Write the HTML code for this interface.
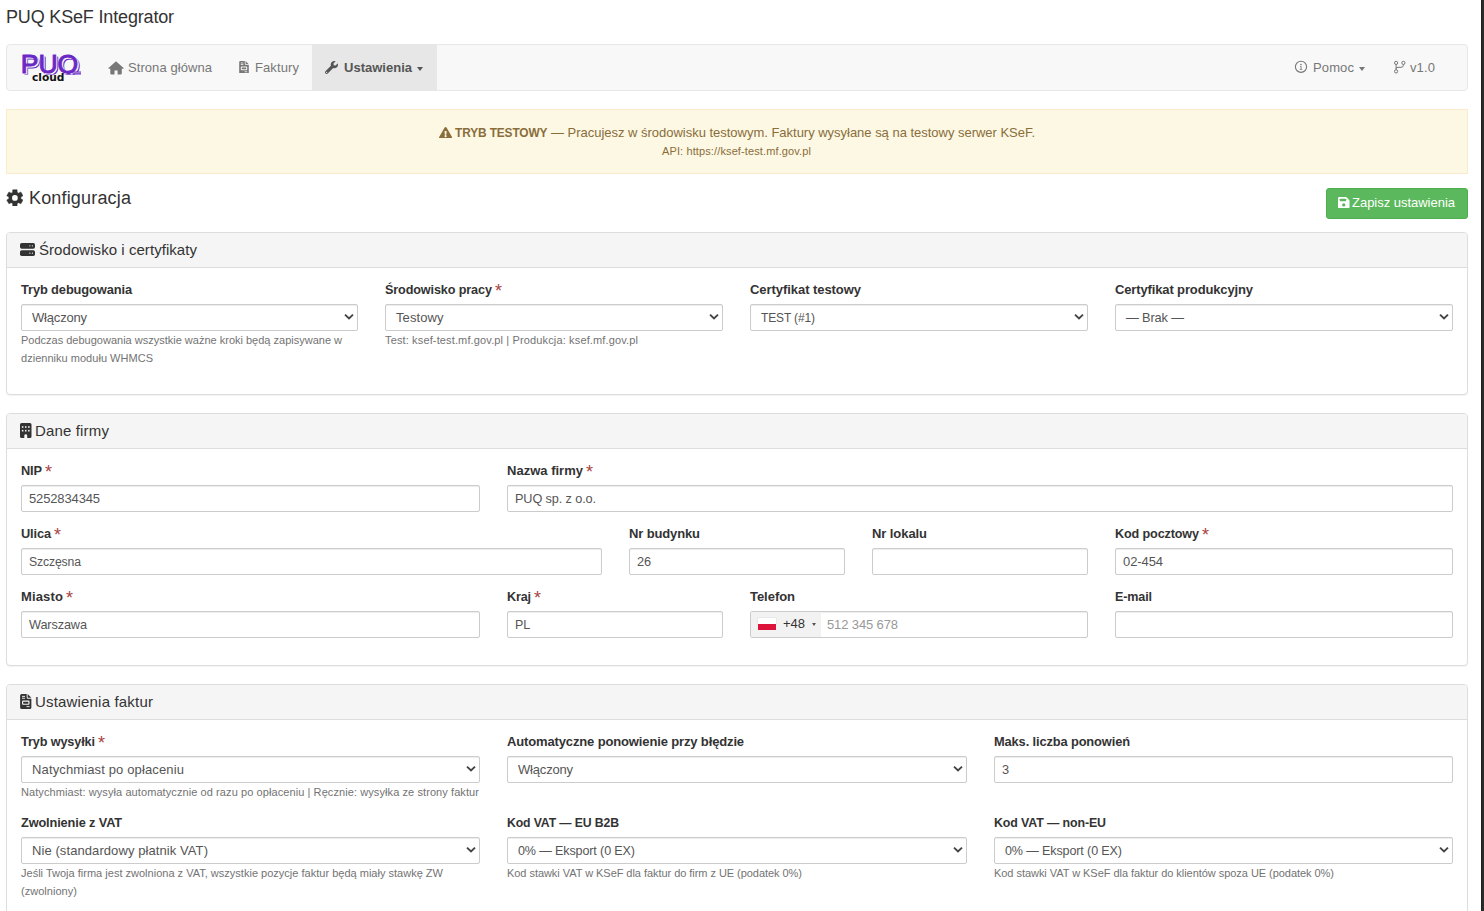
<!DOCTYPE html>
<html lang="pl">
<head>
<meta charset="utf-8">
<title>PUQ KSeF Integrator</title>
<style>
*{box-sizing:border-box}
html,body{margin:0;padding:0}
body{width:1484px;height:911px;overflow:hidden;background:#fff;position:relative;
 font-family:"Liberation Sans",sans-serif;font-size:13px;line-height:18px;color:#333}
.edge{position:absolute;left:1481px;top:0;width:3px;height:911px;background:#2b2b2b;border-left:1px solid #202020}
.a{position:absolute;white-space:nowrap}
.title{left:6px;top:4px;margin:0;font-size:18px;line-height:26px;font-weight:400;color:#333}
.navbar{position:absolute;left:6px;top:44px;width:1462px;height:47px;background:#f8f8f8;border:1px solid #e7e7e7;border-radius:4px}
.nav-active{position:absolute;left:312px;top:45px;width:125px;height:45px;background:#e7e7e7}
.nv{top:58px;line-height:18px;color:#777;font-size:13px}
.nv.act{color:#555;font-weight:700}
.caret{position:absolute;width:0;height:0;border-top:4px solid #777;border-left:3.5px solid transparent;border-right:3.5px solid transparent}
.alert{position:absolute;left:6px;top:109px;width:1462px;height:65px;background:#fcf8e3;border:1px solid #faebcc;border-radius:0}
.al{color:#8a6d3b}
.conf{margin:0;font-size:18px;line-height:26px;font-weight:400}
.btn-save{position:absolute;left:1326px;top:188px;width:142px;height:31px;background:#5cb85c;border:1px solid #4cae4c;border-radius:3px}
.panel{position:absolute;left:6px;width:1462px;background:#fff;border:1px solid #ddd;border-radius:4px;box-shadow:0 1px 1px rgba(0,0,0,.05)}
.ph{position:absolute;left:7px;width:1460px;height:35px;background:#f5f5f5;border-bottom:1px solid #ddd;border-radius:3px 3px 0 0}
.pt{font-size:15px;line-height:20px;color:#333}
.lbl{font-weight:700;line-height:18px;color:#333}
.req{color:#a94442;font-weight:400;line-height:18px}
.box{position:absolute;height:27px;background:#fff;border:1px solid #ccc;border-radius:2px;box-shadow:inset 0 1px 1px rgba(0,0,0,.075)}
.val{color:#555;font-size:13px;line-height:18px}
.ph-t{color:#999}
.help{font-size:11px;line-height:16px;color:#737373}
.chev{position:absolute}
</style>
</head>
<body>
<div class="a title" style="left:6px;top:4px;"><span style="letter-spacing:-0.166px;">PUQ KSeF Integrator</span></div><div class="navbar"></div><div class="nav-active"></div><div class="a nv" style="left:128px;top:59px;"><span style="letter-spacing:0.07px;">Strona główna</span></div><div class="a nv" style="left:255px;top:59px;"><span style="letter-spacing:0.101px;">Faktury</span></div><div class="a nv act" style="left:344px;top:59px;"><span style="letter-spacing:0.008px;">Ustawienia</span></div><div class="caret" style="left:417px;top:67px;border-top-color:#555"></div><div class="a nv" style="left:1313px;top:59px;"><span style="letter-spacing:0.118px;">Pomoc</span></div><div class="caret" style="left:1359px;top:67px"></div><div class="a nv" style="left:1410px;top:59px;"><span style="letter-spacing:0.121px;">v1.0</span></div><div class="alert"></div><div class="a al" style="left:455px;top:124px;"><span style="font-size:11.91px;letter-spacing:-0.127px;font-weight:700">TRYB TESTOWY</span> <span style="letter-spacing:-0.019px;">— Pracujesz w środowisku testowym. Faktury wysyłane są na testowy serwer KSeF.</span></div><div class="a al" style="left:662px;top:143px;font-size:11px;line-height:16px"><span style="letter-spacing:0.118px;">API: https://ksef-test.mf.gov.pl</span></div><div class="a conf" style="left:29px;top:184.7px;"><span style="letter-spacing:0.167px;">Konfiguracja</span></div><div class="btn-save"></div><div class="a " style="left:1352px;top:194px;color:#fff"><span style="letter-spacing:-0.02px;">Zapisz ustawienia</span></div>
<div class="panel" style="top:232px;height:163px"></div><div class="ph" style="top:233px"></div><div class="a pt" style="left:39px;top:240px;"><span style="letter-spacing:0.055px;">Środowisko i certyfikaty</span></div><div class="a lbl" style="left:21px;top:280.5px;"><span style="font-size:12.86px;letter-spacing:-0.122px;">Tryb debugowania</span></div><div class="a lbl" style="left:385px;top:280.5px;"><span style="font-size:12.64px;letter-spacing:-0.122px;">Środowisko pracy</span></div><div class="a req" style="left:495px;top:281.5px;font-size:18px">*</div><div class="a lbl" style="left:750px;top:280.5px;"><span style="letter-spacing:-0.056px;">Certyfikat testowy</span></div><div class="a lbl" style="left:1115px;top:280.5px;"><span style="letter-spacing:-0.134px;">Certyfikat produkcyjny</span></div><div class="box" style="left:21px;top:304px;width:337px"></div><div class="a val" style="left:32px;top:308.5px;"><span style="letter-spacing:-0.181px;">Włączony</span></div><svg class="chev" style="left:343px;top:313px" width="12" height="8" viewBox="0 0 12 8"><path d="M2 1.6 L6 5.4 L10 1.6" fill="none" stroke="#444" stroke-width="1.9"/></svg><div class="box" style="left:385px;top:304px;width:338px"></div><div class="a val" style="left:396px;top:308.5px;"><span style="letter-spacing:0.082px;">Testowy</span></div><svg class="chev" style="left:708px;top:313px" width="12" height="8" viewBox="0 0 12 8"><path d="M2 1.6 L6 5.4 L10 1.6" fill="none" stroke="#444" stroke-width="1.9"/></svg><div class="box" style="left:750px;top:304px;width:338px"></div><div class="a val" style="left:761px;top:308.5px;"><span style="font-size:11.99px;letter-spacing:-0.127px;">TEST (#1)</span></div><svg class="chev" style="left:1073px;top:313px" width="12" height="8" viewBox="0 0 12 8"><path d="M2 1.6 L6 5.4 L10 1.6" fill="none" stroke="#444" stroke-width="1.9"/></svg><div class="box" style="left:1115px;top:304px;width:338px"></div><div class="a val" style="left:1126px;top:308.5px;"><span style="font-size:12.78px;letter-spacing:-0.127px;">— Brak —</span></div><svg class="chev" style="left:1438px;top:313px" width="12" height="8" viewBox="0 0 12 8"><path d="M2 1.6 L6 5.4 L10 1.6" fill="none" stroke="#444" stroke-width="1.9"/></svg><div class="a help" style="left:21px;top:332px;"><span style="">Podczas debugowania wszystkie ważne kroki będą zapisywane w</span></div><div class="a help" style="left:21px;top:350px;"><span style="letter-spacing:0.026px;">dzienniku modułu WHMCS</span></div><div class="a help" style="left:385px;top:332px;"><span style="letter-spacing:0.138px;">Test: ksef-test.mf.gov.pl | Produkcja: ksef.mf.gov.pl</span></div>
<div class="panel" style="top:413px;height:253px"></div><div class="ph" style="top:414px"></div><div class="a pt" style="left:35px;top:421px;"><span style="letter-spacing:0.155px;">Dane firmy</span></div><div class="a lbl" style="left:21px;top:461.5px;"><span style="font-size:12.81px;letter-spacing:-0.142px;">NIP</span></div><div class="a req" style="left:45px;top:462.5px;font-size:18px">*</div><div class="a lbl" style="left:507px;top:461.5px;"><span style="letter-spacing:0.012px;">Nazwa firmy</span></div><div class="a req" style="left:586px;top:462.5px;font-size:18px">*</div><div class="box" style="left:21px;top:485px;width:459px"></div><div class="a val" style="left:29px;top:489.5px;"><span style="letter-spacing:-0.138px;">5252834345</span></div><div class="box" style="left:507px;top:485px;width:946px"></div><div class="a val" style="left:515px;top:489.5px;"><span style="font-size:12.71px;letter-spacing:-0.123px;">PUQ sp. z o.o.</span></div><div class="a lbl" style="left:21px;top:524.5px;"><span style="font-size:12.8px;letter-spacing:-0.133px;">Ulica</span></div><div class="a req" style="left:54px;top:525.5px;font-size:18px">*</div><div class="a lbl" style="left:629px;top:524.5px;"><span style="letter-spacing:-0.13px;">Nr budynku</span></div><div class="a lbl" style="left:872px;top:524.5px;"><span style="letter-spacing:-0.074px;">Nr lokalu</span></div><div class="a lbl" style="left:1115px;top:524.5px;"><span style="font-size:12.61px;letter-spacing:-0.127px;">Kod pocztowy</span></div><div class="a req" style="left:1202px;top:525.5px;font-size:18px">*</div><div class="box" style="left:21px;top:548px;width:581px"></div><div class="a val" style="left:29px;top:552.5px;"><span style="font-size:12.21px;letter-spacing:-0.127px;">Szczęsna</span></div><div class="box" style="left:629px;top:548px;width:216px"></div><div class="a val" style="left:637px;top:552.5px;"><span style="font-size:12.79px;letter-spacing:-0.157px;">26</span></div><div class="box" style="left:872px;top:548px;width:216px"></div><div class="box" style="left:1115px;top:548px;width:338px"></div><div class="a val" style="left:1123px;top:552.5px;"><span style="letter-spacing:-0.088px;">02-454</span></div><div class="a lbl" style="left:21px;top:587.5px;"><span style="letter-spacing:0.151px;">Miasto</span></div><div class="a req" style="left:66px;top:588.5px;font-size:18px">*</div><div class="a lbl" style="left:507px;top:587.5px;"><span style="font-size:12.58px;letter-spacing:-0.137px;">Kraj</span></div><div class="a req" style="left:534px;top:588.5px;font-size:18px">*</div><div class="a lbl" style="left:750px;top:587.5px;"><span style="letter-spacing:-0.041px;">Telefon</span></div><div class="a lbl" style="left:1115px;top:587.5px;"><span style="font-size:12.57px;letter-spacing:-0.132px;">E-mail</span></div><div class="box" style="left:21px;top:611px;width:459px"></div><div class="a val" style="left:29px;top:615.5px;"><span style="font-size:12.73px;letter-spacing:-0.127px;">Warszawa</span></div><div class="box" style="left:507px;top:611px;width:216px"></div><div class="a val" style="left:515px;top:615.5px;"><span style="font-size:12.46px;letter-spacing:-0.164px;">PL</span></div><div class="box" style="left:750px;top:611px;width:338px"></div><div style="position:absolute;left:751px;top:612px;width:70px;height:25px;background:#f2f2f2"></div><div style="position:absolute;left:758px;top:618px;width:18px;height:6px;background:#fff;box-shadow:0 0 0 .5px #ddd"></div><div style="position:absolute;left:758px;top:624px;width:18px;height:6px;background:#dc143c"></div><div class="a " style="left:783px;top:614.8px;color:#333;line-height:18px"><span style="letter-spacing:-0.025px;">+48</span></div><div class="caret" style="left:812px;top:623px;border-top:3px solid #555;border-left-width:2px;border-right-width:2px"></div><div class="a val ph-t" style="left:827px;top:615.5px;"><span style="letter-spacing:-0.124px;">512 345 678</span></div><div class="box" style="left:1115px;top:611px;width:338px"></div>
<div class="panel" style="top:684px;height:260px"></div><div class="ph" style="top:685px"></div><div class="a pt" style="left:35px;top:692px;"><span style="letter-spacing:0.178px;">Ustawienia faktur</span></div><div class="a lbl" style="left:21px;top:732.5px;"><span style="font-size:12.68px;letter-spacing:-0.124px;">Tryb wysyłki</span></div><div class="a req" style="left:98px;top:733.5px;font-size:18px">*</div><div class="a lbl" style="left:507px;top:732.5px;"><span style="letter-spacing:-0.14px;">Automatyczne ponowienie przy błędzie</span></div><div class="a lbl" style="left:994px;top:732.5px;"><span style="font-size:12.85px;letter-spacing:-0.123px;">Maks. liczba ponowień</span></div><div class="box" style="left:21px;top:756px;width:459px"></div><div class="a val" style="left:32px;top:760.5px;"><span style="letter-spacing:0.134px;">Natychmiast po opłaceniu</span></div><svg class="chev" style="left:465px;top:765px" width="12" height="8" viewBox="0 0 12 8"><path d="M2 1.6 L6 5.4 L10 1.6" fill="none" stroke="#444" stroke-width="1.9"/></svg><div class="box" style="left:507px;top:756px;width:460px"></div><div class="a val" style="left:518px;top:760.5px;"><span style="letter-spacing:-0.181px;">Włączony</span></div><svg class="chev" style="left:952px;top:765px" width="12" height="8" viewBox="0 0 12 8"><path d="M2 1.6 L6 5.4 L10 1.6" fill="none" stroke="#444" stroke-width="1.9"/></svg><div class="box" style="left:994px;top:756px;width:459px"></div><div class="a val" style="left:1002px;top:760.5px;"><span style="font-size:12.79px;letter-spacing:-0.118px;">3</span></div><div class="a help" style="left:21px;top:784px;"><span style="letter-spacing:0.085px;">Natychmiast: wysyła automatycznie od razu po opłaceniu | Ręcznie: wysyłka ze strony faktur</span></div><div class="a lbl" style="left:21px;top:813.5px;"><span style="font-size:12.75px;letter-spacing:-0.126px;">Zwolnienie z VAT</span></div><div class="a lbl" style="left:507px;top:813.5px;"><span style="font-size:12.25px;letter-spacing:-0.122px;">Kod VAT — EU B2B</span></div><div class="a lbl" style="left:994px;top:813.5px;"><span style="font-size:12.4px;letter-spacing:-0.121px;">Kod VAT — non-EU</span></div><div class="box" style="left:21px;top:837px;width:459px"></div><div class="a val" style="left:32px;top:841.5px;"><span style="letter-spacing:0.083px;">Nie (standardowy płatnik VAT)</span></div><svg class="chev" style="left:465px;top:846px" width="12" height="8" viewBox="0 0 12 8"><path d="M2 1.6 L6 5.4 L10 1.6" fill="none" stroke="#444" stroke-width="1.9"/></svg><div class="box" style="left:507px;top:837px;width:460px"></div><div class="a val" style="left:518px;top:841.5px;"><span style="font-size:12.55px;letter-spacing:-0.123px;">0% — Eksport (0 EX)</span></div><svg class="chev" style="left:952px;top:846px" width="12" height="8" viewBox="0 0 12 8"><path d="M2 1.6 L6 5.4 L10 1.6" fill="none" stroke="#444" stroke-width="1.9"/></svg><div class="box" style="left:994px;top:837px;width:459px"></div><div class="a val" style="left:1005px;top:841.5px;"><span style="font-size:12.55px;letter-spacing:-0.123px;">0% — Eksport (0 EX)</span></div><svg class="chev" style="left:1438px;top:846px" width="12" height="8" viewBox="0 0 12 8"><path d="M2 1.6 L6 5.4 L10 1.6" fill="none" stroke="#444" stroke-width="1.9"/></svg><div class="a help" style="left:21px;top:865px;"><span style="letter-spacing:0.009px;">Jeśli Twoja firma jest zwolniona z VAT, wszystkie pozycje faktur będą miały stawkę ZW</span></div><div class="a help" style="left:21px;top:883px;"><span style="letter-spacing:0.034px;">(zwolniony)</span></div><div class="a help" style="left:507px;top:865px;"><span style="letter-spacing:-0.048px;">Kod stawki VAT w KSeF dla faktur do firm z UE (podatek 0%)</span></div><div class="a help" style="left:994px;top:865px;"><span style="letter-spacing:-0.046px;">Kod stawki VAT w KSeF dla faktur do klientów spoza UE (podatek 0%)</span></div>
<svg style="position:absolute;left:18px;top:50px" width="68" height="36" viewBox="0 0 68 36"><defs><clipPath id="cb"><rect x="0" y="0" width="68" height="24.4"/></clipPath></defs><g clip-path="url(#cb)"><text x="4.8" y="24.5" textLength="57.5" lengthAdjust="spacingAndGlyphs" style="font-family:'Liberation Sans',sans-serif;font-weight:400;font-size:26.5px" fill="#6a28c4" stroke="#6a28c4" stroke-width="1" stroke-linejoin="round">PUQ</text><text x="3.9" y="23.8" textLength="57.5" lengthAdjust="spacingAndGlyphs" style="font-family:'Liberation Sans',sans-serif;font-weight:400;font-size:26.5px" fill="#f8f8f8" stroke="#f8f8f8" stroke-width="1" stroke-linejoin="round">PUQ</text><text x="2.7" y="22.8" textLength="57.5" lengthAdjust="spacingAndGlyphs" style="font-family:'Liberation Sans',sans-serif;font-weight:400;font-size:26.5px" fill="#6a28c4" stroke="#6a28c4" stroke-width="1" stroke-linejoin="round">PUQ</text></g><path d="M54 21.6H63V24.4H55Z" fill="#6a28c4"/><path d="M55 22.9H63" stroke="#f8f8f8" stroke-width=".6"/><text x="14" y="30.8" textLength="32.5" lengthAdjust="spacingAndGlyphs" style="font-family:'DejaVu Sans','Liberation Sans',sans-serif;font-weight:700;font-size:10.5px" fill="#111">cloud</text></svg><svg style="position:absolute;left:107.5px;top:60.5px" width="16" height="14" viewBox="0 0 16 14"><path d="M8 .3 L15.6 6.9 Q16 7.6 15.2 7.7 H13.8 V12.3 Q13.8 13.5 12.6 13.5 H9.6 V9.4 H6.5 V13.5 H3.5 Q2.3 13.5 2.3 12.3 V7.7 H.9 Q0 7.6 .5 6.9 Z" fill="#777"/></svg><svg style="position:absolute;left:239.2px;top:60.7px" width="10" height="12.8" viewBox="0 0 12 16"><path d="M1.6 0 H7 V3.6 Q7 5 8.4 5 H12 V14.4 Q12 16 10.4 16 H1.6 Q0 16 0 14.4 V1.6 Q0 0 1.6 0 Z M8 0 L12 4 H8 Z" fill="#777"/><rect x="2" y="2" width="3.2" height="1" fill="#f8f8f8"/><rect x="2" y="4" width="3.2" height="1" fill="#f8f8f8"/><rect x="2" y="7" width="8" height="4.5" rx="1" fill="#f8f8f8"/><rect x="3.2" y="8.2" width="5.6" height="2.1" rx=".4" fill="#777"/><rect x="6.8" y="13" width="3.2" height="1" fill="#f8f8f8"/></svg><svg style="position:absolute;left:325.2px;top:61px" width="13" height="13" viewBox="0 0 512 512"><path d="M507.73 109.1c-2.24-9.03-13.54-12.09-20.12-5.51l-74.36 74.36-67.88-11.31-11.31-67.88 74.36-74.36c6.62-6.62 3.43-17.9-5.66-20.16-47.38-11.74-99.55.91-136.58 37.93-39.64 39.64-50.55 97.1-34.05 147.2L18.74 402.76c-24.99 24.99-24.99 65.51 0 90.5 24.99 24.99 65.51 24.99 90.5 0l213.21-213.21c50.12 16.71 107.47 5.68 147.37-34.22 37.07-37.07 49.7-89.32 37.91-136.73zM64 472c-13.25 0-24-10.75-24-24 0-13.26 10.75-24 24-24s24 10.74 24 24c0 13.25-10.75 24-24 24z" fill="#555"/></svg><svg style="position:absolute;left:1294px;top:60px" width="14" height="14" viewBox="0 0 14 14"><circle cx="7" cy="6.8" r="5.6" fill="none" stroke="#777" stroke-width="1.1"/><circle cx="7" cy="4.6" r=".8" fill="#777"/><path d="M6 6.3H7.5V9H8.2V9.8H5.8V9H6.6V7.1H6Z" fill="#777"/></svg><svg style="position:absolute;left:1392px;top:59px" width="16" height="16" viewBox="0 0 16 16"><g fill="none" stroke="#777" stroke-width="1"><circle cx="4.1" cy="3.9" r="1.6"/><circle cx="11.4" cy="3.9" r="1.6"/><circle cx="4.1" cy="12.4" r="1.6"/><path d="M4.1 5.5V10.8M11.4 5.5V6.2Q11.4 8.3 9 8.3H6Q4.1 8.3 4.1 10"/></g></svg><svg style="position:absolute;left:438.8px;top:126.6px" width="13.2" height="11.7" viewBox="0 0 576 512"><path d="M569.517 440.013C587.975 472.007 564.806 512 527.94 512H48.054c-36.937 0-59.999-40.055-41.577-71.987L246.423 23.985c18.467-32.009 64.72-31.951 83.154 0l239.94 416.028zM288 354c-25.405 0-46 20.595-46 46s20.595 46 46 46 46-20.595 46-46-20.595-46-46-46zm-43.673-165.346l7.418 136c.347 6.364 5.609 11.346 11.982 11.346h48.546c6.373 0 11.635-4.982 11.982-11.346l7.418-136c.375-6.874-5.098-12.654-11.982-12.654h-63.383c-6.884 0-12.356 5.78-11.981 12.654z" fill="#8a6d3b"/></svg><svg style="position:absolute;left:5.6px;top:188.6px" width="17.8" height="17.8" viewBox="-3 -3 106 106"><polygon points="36.5,16.6 37.1,1.7 62.9,1.7 63.5,16.6 72.2,21.6 85.4,14.6 98.3,37.1 85.6,45.0 85.6,55.0 98.3,62.9 85.4,85.4 72.2,78.4 63.5,83.4 62.9,98.3 37.1,98.3 36.5,83.4 27.8,78.4 14.6,85.4 1.7,62.9 14.4,55.0 14.4,45.0 1.7,37.1 14.6,14.6 27.8,21.6" fill="#333" stroke="#333" stroke-width="3" stroke-linejoin="round"/><circle cx="50" cy="50" r="17" fill="#fff"/></svg><svg style="position:absolute;left:1338px;top:197px" width="11.5" height="11.2" viewBox="0 0 14 13.6"><path d="M1.8 0H10L14 4V12.2Q14 14 12.2 14H1.8Q0 14 0 12.2V1.8Q0 0 1.8 0Z" fill="#fff"/><rect x="2.2" y="2.2" width="7.6" height="3" rx=".6" fill="#5cb85c"/><circle cx="7" cy="9.6" r="2" fill="#5cb85c"/></svg><svg style="position:absolute;left:20.1px;top:243.1px" width="15" height="13" viewBox="0 0 15 13"><rect x="0" y="0" width="15" height="5.7" rx="1.7" fill="#333"/><circle cx="9.9" cy="2.85" r=".6" fill="#f5f5f5"/><circle cx="12.4" cy="2.85" r=".6" fill="#f5f5f5"/><rect x="0" y="7.3" width="15" height="5.7" rx="1.7" fill="#333"/><circle cx="9.9" cy="10.15" r=".6" fill="#f5f5f5"/><circle cx="12.4" cy="10.15" r=".6" fill="#f5f5f5"/></svg><svg style="position:absolute;left:20.3px;top:423px" width="11.5" height="15" viewBox="0 0 11.5 15"><path d="M1.6 0H9.9Q11.5 0 11.5 1.6V13.4Q11.5 15 9.9 15H7.2V12.4Q7.2 11.2 5.75 11.2Q4.3 11.2 4.3 12.4V15H1.6Q0 15 0 13.4V1.6Q0 0 1.6 0Z" fill="#333"/><rect x="1.9" y="3.2" width="1.5" height="1.6" fill="#f5f5f5"/><rect x="5" y="3.2" width="1.5" height="1.6" fill="#f5f5f5"/><rect x="8.1" y="3.2" width="1.5" height="1.6" fill="#f5f5f5"/><rect x="1.9" y="6.9" width="1.5" height="1.6" fill="#f5f5f5"/><rect x="5" y="6.9" width="1.5" height="1.6" fill="#f5f5f5"/><rect x="8.1" y="6.9" width="1.5" height="1.6" fill="#f5f5f5"/></svg><svg style="position:absolute;left:20.3px;top:694px" width="11.5" height="15" viewBox="0 0 12 16"><path d="M1.6 0 H7 V3.6 Q7 5 8.4 5 H12 V14.4 Q12 16 10.4 16 H1.6 Q0 16 0 14.4 V1.6 Q0 0 1.6 0 Z M8 0 L12 4 H8 Z" fill="#333"/><rect x="2" y="2" width="3.2" height="1" fill="#f5f5f5"/><rect x="2" y="4" width="3.2" height="1" fill="#f5f5f5"/><rect x="2" y="7" width="8" height="4.5" rx="1" fill="#f5f5f5"/><rect x="3.2" y="8.2" width="5.6" height="2.1" rx=".4" fill="#333"/><rect x="6.8" y="13" width="3.2" height="1" fill="#f5f5f5"/></svg>
<div class="edge"></div>
</body>
</html>
